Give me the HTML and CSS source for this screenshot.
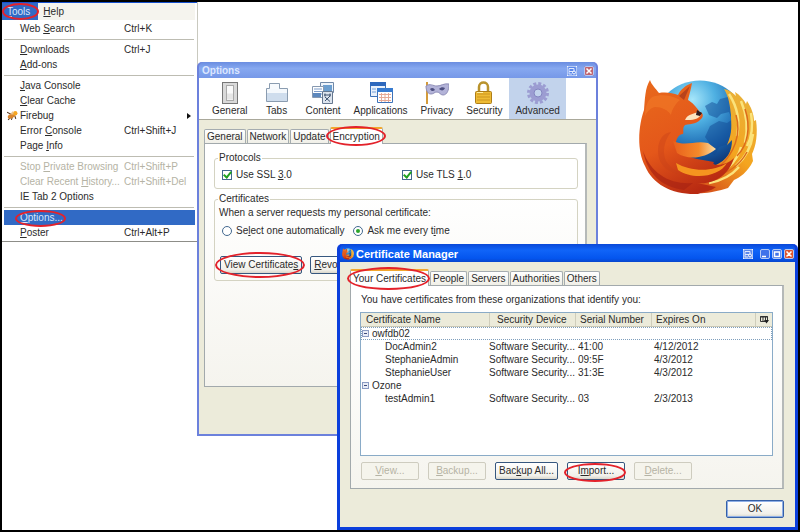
FILE: index.html
```html
<!DOCTYPE html>
<html lang="en">
<head>
<meta charset="utf-8">
<title>Certificate Manager</title>
<link rel="stylesheet" href="styles.css">
</head>
<body>
<svg class="defs" width="0" height="0" aria-hidden="true">
  <defs>
    <radialGradient id="globe" cx="0.42" cy="0.2" r="0.8"><stop offset="0" stop-color="#a6e6fa"/><stop offset="0.3" stop-color="#4fb0e2"/><stop offset="0.65" stop-color="#1a66b0"/><stop offset="1" stop-color="#0b2763"/></radialGradient>
    <linearGradient id="fur" x1="0.1" y1="0" x2="0.55" y2="1"><stop offset="0" stop-color="#e8691c"/><stop offset="0.55" stop-color="#e4571a"/><stop offset="1" stop-color="#b82a12"/></linearGradient>
    <linearGradient id="tail" x1="0.8" y1="0" x2="0.2" y2="1"><stop offset="0" stop-color="#e9b23a"/><stop offset="0.5" stop-color="#f4a51f"/><stop offset="1" stop-color="#d2451a"/></linearGradient>
    <linearGradient id="arm" x1="0" y1="0" x2="1" y2="0"><stop offset="0" stop-color="#e8601c"/><stop offset="0.6" stop-color="#f58a2a"/><stop offset="1" stop-color="#fde0a8"/></linearGradient>
    <symbol id="firefox" viewBox="0 0 120 118">
      <circle cx="62" cy="49" r="47.500" fill="url(#globe)"/>
      <path d="M67 27l7-4 5 2 3-5 8-2 5 4 6 1 3 8-5 5-6 2-2-5-8 2-4 4-8-3z M72 47l9-5 8 2 6-4 5 7-3 9-7 9-9 3-4 8-6-2 1-9-5-7z" fill="#124a93" opacity="0.5"/>
      <path d="M86 10C91 11 95 14 98 17L97 13C102 16 106 21 108 25L109 22C113 28 116 35 116 42L118 41C120 55 118 67 114 75L115 82C110 93 101 99 96 101L90 109C80 112 68 115 60 114L43 98L76 87C90 81 94 72 94 61L89 66C95 53 93 45 93 36C92 27 91 18 86 10Z" fill="url(#tail)"/>
      <path d="M91 15c9 14 11 28 8 42M103 22c6 14 7 29 4 42M113 34c2 12 1 24-4 33M103 68C99 84 85 95 70 100M115 55c-2 15-9 25-17 32M101 88c-7 8-18 14-30 16" fill="none" stroke="#fbe37b" stroke-width="2.500"/>
      <path d="M98 36c6 20-3 39-15 50M107 30c6 18 3 36-8 47M109 73c-7 13-20 22-36 25" fill="none" stroke="#dc6b1b" stroke-width="1.500"/>
      <path d="M12 1C13 5 18 10 21 14C28 13 35 14 40 16C42 11 48 6 54 4C53 10 51 17 50 21C54 23 59 29 62 33C65 34 66 37 63 40C60 44 54 45 47 46C44 49 46 52 45 55C41 55 39 59 38 63C41 72 49 78 59 80L76 83C72 87 87 88 96 79C91 96 76 106 59 104L78 108C72 113 67 112 60 115C35 116 15 106 7 87C-2 70 1 45 6 31C7 20 7 9 12 1Z" fill="url(#fur)"/>
      <path d="M14 18c8-3 20-2 28 3-4 3-8 9-9 15-3-5-9-8-16-8-5 1-8 5-10 9 0-8 2-15 7-19z" fill="#f17a28" opacity="0.6"/>
      <path d="M46 21l6-14-11 10z" fill="#b8431b"/>
      <path d="M50 41c7 0 11-2 13-5l-1-4c-7 4-12 2-15 9z" fill="#fbe3c0"/>
      <path d="M59 31l5 3-2 3-4-1z" fill="#2c1a20"/>
      <path d="M33 53c-7 9-9 20-5 29 5 8 12 12 20 14-18-1-28-10-28-24 0-11 5-18 13-19z" fill="#c7401a" opacity="0.4"/>
      <path d="M35 62C49 68 56 61 70 64L78 70C66 80 49 81 39 74Z" fill="url(#arm)"/>
      <path d="M5 72c8 23 28 34 50 32l-9 7C22 108 9 93 5 72z" fill="#a92313" opacity="0.7"/>
      <path d="M38 84c15 9 38 9 51 0-7 13-33 18-49 7z" fill="#f5951f"/>
    </symbol>
    <symbol id="dock" viewBox="0 0 10 10">
      <rect width="10" height="10" rx="1" fill="#5b87ea"/>
      <path d="M2 2.500h5v3H2zM2 5.500v2.500h3" fill="none" stroke="#dfe9ff" stroke-width="1"/>
      <circle cx="7" cy="6.500" r="1.500" fill="#5b87ea" stroke="#fff" stroke-width="1"/>
    </symbol>
  </defs>
</svg>

<main class="desktop">
  <nav class="menu">
    <div class="menubar">
      <button class="menubar-item open marked mark-tools"><u>T</u>ools</button>
      <button class="menubar-item"><u>H</u>elp</button>
    </div>
    <div class="menu-list">
      <button class="item"><span>Web <u>S</u>earch</span><span>Ctrl+K</span></button>
      <hr>
      <button class="item"><span><u>D</u>ownloads</span><span>Ctrl+J</span></button>
      <button class="item"><span><u>A</u>dd-ons</span></button>
      <hr>
      <button class="item"><span><u>J</u>ava Console</span></button>
      <button class="item"><span><u>C</u>lear Cache</span></button>
      <button class="item submenu"><svg class="bug" viewBox="0 0 10 10"><path d="M0 2l4 2M1 9l3-3M4 9l1-3M8 8L7 5" stroke="#5a3a22"/><ellipse cx="4" cy="5.500" rx="3.500" ry="2" fill="#d9852c" transform="rotate(-25 4 5.500)"/><circle cx="7.500" cy="3" r="2" fill="#f5a623"/><path d="M3 4l2-3 1 3z" fill="#e9c08b"/></svg><span>Firebug</span></button>
      <button class="item"><span>Error <u>C</u>onsole</span><span>Ctrl+Shift+J</span></button>
      <button class="item"><span>Page <u>I</u>nfo</span></button>
      <hr>
      <button class="item" disabled><span>Stop <u>P</u>rivate Browsing</span><span>Ctrl+Shift+P</span></button>
      <button class="item" disabled><span>Clear Recent <u>H</u>istory...</span><span>Ctrl+Shift+Del</span></button>
      <button class="item"><span>IE Tab 2 Options</span></button>
      <hr>
      <button class="item chosen"><span class="marked mark-options"><u>O</u>ptions...</span></button>
      <button class="item"><span><u>P</u>oster</span><span>Ctrl+Alt+P</span></button>
    </div>
  </nav>

  <svg class="logo" role="img" aria-label="Firefox"><use href="#firefox"/></svg>

  <section class="window options">
    <header class="titlebar">
      <h2>Options</h2>
      <button class="tb" aria-label="Dock"><svg><use href="#dock"/></svg></button>
      <button class="tb close" aria-label="Close options"><svg viewBox="0 0 10 10"><path d="M2.500 2.500l5 5M7.500 2.500l-5 5"/></svg></button>
    </header>
    <div class="toolbar">
      <button class="tool"><svg viewBox="0 0 24 24"><rect x="4.500" y="1.500" width="15" height="21" fill="#d9d9d9" stroke="#777"/><rect x="8.500" y="4.500" width="7" height="15" fill="#fafafa" stroke="#aaa"/><path d="M9 12.500h6v6H9z" fill="#e6e6e6"/></svg>General</button>
      <button class="tool"><svg viewBox="0 0 24 24"><path d="M1.500 20.500v-13h3v-5h10v5h8v13z" fill="#cfdded" stroke="#8a9cb0"/><path d="M2 8h20v4H2z" fill="#f4f8fc"/><path d="M5 3h9v5H5z" fill="#f7fafd"/></svg>Tabs</button>
      <button class="tool"><svg viewBox="0 0 24 24"><path d="M9.500 1.500h13v10h-13z" fill="#eef4fb" stroke="#7089a8"/><path d="M12 4h9v6h-9z" fill="#6c9fd0"/><path d="M1.500 5.500h11v11h-11z" fill="#fff" stroke="#8799b0"/><path d="M3 8h8M3 10.500h8M3 13h8" stroke="#7d9cc9"/><path d="M2 12h8v4H2z" fill="#5d88bd"/><path d="M11.500 10.500h10v12h-10z" fill="#dce4ee" stroke="#65778f"/><path d="M13 14h7M14 12.500v3M19 12.500v3M14 20l5-5M14 16l5 4.500" stroke="#3e526f"/></svg>Content</button>
      <button class="tool"><svg viewBox="0 0 24 24"><path d="M1.500 1.500h15v14h-15z" fill="#e9f1fb" stroke="#3d72b8"/><path d="M1 1h16v4H1z" fill="#2d68bd"/><path d="M3 8h4M3 11h4" stroke="#74a0d8"/><path d="M8.500 7.500h15v14h-15z" fill="#fff" stroke="#3d72b8"/><path d="M8 7h16v4H8z" fill="#377bd0"/><path d="M10 13.500h12M10 16.500h12M10 19.500h12M12.500 12v9M16 12v9M19.500 12v9" stroke="#e6aa96"/></svg>Applications</button>
      <button class="tool"><svg viewBox="0 0 24 24"><path d="M2 1v22" stroke="#d49b3a" stroke-width="2"/><path d="M1 5c4-3 7 0 11 0s7-3 12-2c0 6-2 11-6 11-3 0-3-3-6-3s-3 2-6 2c-4 0-5-5-5-8z" fill="#b3b3d8" stroke="#8f8eb8"/><path d="M5 8c2-2 4-1 5 1-2 2-4 1-5-1zM14 8c2-2 4-2 6-1-1 3-4 3-6 1z" fill="#4d4f80"/></svg>Privacy</button>
      <button class="tool"><svg viewBox="0 0 24 24"><path d="M7 12V6c0-6 9-6 9 0v6" fill="none" stroke="#b9932c" stroke-width="2.500"/><rect x="3.500" y="10.500" width="16" height="12" rx="1" fill="#eebb35" stroke="#ad7d18"/><path d="M5 13h13M5 16h13M5 19h13" stroke="#cc9520"/><path d="M5 11.500h6" stroke="#fff0a4"/></svg>Security</button>
      <button class="tool current"><svg viewBox="0 0 24 24"><circle cx="12" cy="12" r="9.500" fill="none" stroke="#9c9dd2" stroke-width="3" stroke-dasharray="2.980 1.990"/><circle cx="12" cy="12" r="6" fill="none" stroke="#9c9dd2" stroke-width="5"/><circle cx="12" cy="12" r="4" fill="#c2d3ec" stroke="#8485c0"/></svg>Advanced</button>
    </div>
    <div class="body">
      <div class="tabs">
        <button class="tab">General</button>
        <button class="tab">Network</button>
        <button class="tab">Update</button>
        <button class="tab active marked mark-encryption">Encryption</button>
      </div>
      <div class="panel">
        <fieldset class="protocols">
          <legend>Protocols</legend>
          <label><input type="checkbox" checked><span>Use SSL <u>3</u>.0</span></label>
          <label><input type="checkbox" checked><span>Use TLS <u>1</u>.0</span></label>
        </fieldset>
        <fieldset class="certificates">
          <legend>Certificates</legend>
          <p>When a server requests my personal certificate:</p>
          <div class="choices">
            <label><input type="radio" name="ask"><span>Se<u>l</u>ect one automatically</span></label>
            <label><input type="radio" name="ask" checked><span>Ask me every t<u>i</u>me</span></label>
          </div>
          <div class="actions">
            <button class="btn marked mark-view">View Certificate<u>s</u></button>
            <button class="btn"><u>R</u>evocation Lists</button>
          </div>
        </fieldset>
      </div>
    </div>
  </section>

  <section class="window manager">
    <header class="titlebar">
      <svg class="app-icon"><use href="#firefox"/></svg>
      <h2>Certificate Manager</h2>
      <button class="tb" aria-label="Dock"><svg><use href="#dock"/></svg></button>
      <button class="tb first" aria-label="Minimize"><svg viewBox="0 0 10 10"><path d="M2 7.500h4"/></svg></button>
      <button class="tb" aria-label="Maximize"><svg viewBox="0 0 10 10"><path d="M2.500 3h5v4.500h-5z"/></svg></button>
      <button class="tb close" aria-label="Close"><svg viewBox="0 0 10 10"><path d="M2.500 2.500l5 5M7.500 2.500l-5 5"/></svg></button>
    </header>
    <div class="body">
      <div class="tabs">
        <button class="tab active marked mark-yours">Your Certificates</button>
        <button class="tab">People</button>
        <button class="tab">Servers</button>
        <button class="tab">Authorities</button>
        <button class="tab">Others</button>
      </div>
      <div class="panel">
        <p>You have certificates from these organizations that identify you:</p>
        <div class="list">
          <table>
            <colgroup><col class="c-name"><col class="c-device"><col class="c-serial"><col><col class="c-pick"></colgroup>
            <thead>
              <tr><th>Certificate Name</th><th class="h-device">Security Device</th><th>Serial Number</th><th>Expires On</th><th><svg class="pick" viewBox="0 0 9 9" role="img" aria-label="Choose columns"><path d="M.5 1.500h7v5h-7zM0 2h8M3 2v4M5.500 2v3" fill="none" stroke="#333"/><path d="M4 5h5L6.500 8.500z" fill="#222"/></svg></th></tr>
            </thead>
            <tbody>
              <tr class="group focus"><td colspan="5"><span class="twisty"></span>owfdb02</td></tr>
              <tr><td>DocAdmin2</td><td class="device">Software Security...</td><td>41:00</td><td colspan="2">4/12/2012</td></tr>
              <tr><td>StephanieAdmin</td><td class="device">Software Security...</td><td>09:5F</td><td colspan="2">4/3/2012</td></tr>
              <tr><td>StephanieUser</td><td class="device">Software Security...</td><td>31:3E</td><td colspan="2">4/3/2012</td></tr>
              <tr class="group"><td colspan="5"><span class="twisty"></span>Ozone</td></tr>
              <tr><td>testAdmin1</td><td class="device">Software Security...</td><td>03</td><td colspan="2">2/3/2013</td></tr>
            </tbody>
          </table>
        </div>
        <div class="actions">
          <button class="btn" disabled><u>V</u>iew...</button>
          <button class="btn" disabled><u>B</u>ackup...</button>
          <button class="btn">Bac<u>k</u>up All...</button>
          <button class="btn marked mark-import">I<u>m</u>port...</button>
          <button class="btn" disabled><u>D</u>elete...</button>
        </div>
      </div>
      <footer><button class="btn default">OK</button></footer>
    </div>
  </section>
</main>
</body>
</html>
```
FILE: styles.css
```css
* { box-sizing: border-box; }

body {
  margin: 0;
  font: 10px/12px "Liberation Sans", Arial, sans-serif;
  color: #2b2b2b;
  background: #fff;
}

button {
  margin: 0;
  padding: 0;
  border: 0;
  background: none;
  font: inherit;
  color: inherit;
  white-space: nowrap;
}

h2, p { margin: 0; }
.defs { position: absolute; }

.desktop {
  position: relative;
  min-height: 100vh;
  overflow: hidden;
}

.desktop::after {
  content: "";
  position: absolute;
  inset: 0;
  border: 2px solid #000;
  pointer-events: none;
}

/* red highlight rings */
.marked { position: relative; }

.marked::after {
  content: "";
  position: absolute;
  z-index: 2;
  border: 2px solid #e3222b;
  border-radius: 50%;
  pointer-events: none;
}

.mark-tools::after { inset: 0 -1px 0 0; }
.mark-options::after { inset: -2px -3px -3px -5px; }
.mark-encryption::after { inset: -3px -4px -2px -5px; }
.mark-view::after { inset: -5px -4px -5px -6px; }
.mark-yours::after { inset: -4px -2px -4px -4px; }
.mark-import::after { inset: 0 -2px -3px -4px; }

/* tools menu */
.menu {
  position: absolute;
  left: 0;
  top: 0;
  width: 198px;
  padding: 3px 2px 0;
  border-right: 1px solid #c9c9bf;
  border-bottom: 1px solid #8d8d88;
  background: linear-gradient(#1550cf, #1550cf) 0 0 / 100% 3px no-repeat #fff;
}

.menubar {
  display: flex;
  height: 17px;
  background: #f5f4ee;
}

.menubar-item { padding: 0 8px 0 5px; }
.menubar-item.open { background: #316ac5; color: #dce6f8; }

.menu-list { padding: 1px 0; }

.item {
  display: grid;
  grid-template-columns: 104px 1fr;
  align-items: center;
  position: relative;
  width: 100%;
  height: 15px;
  padding-left: 16px;
  border-left: 2px solid #fff;
  text-align: left;
}

.item span { justify-self: start; }
.item:disabled { color: #b5b3a4; }
.item.chosen { background: #316ac5; color: #dce6f8; }

.menu-list hr {
  height: 1px;
  margin: 3px 1px 2px 2px;
  border: 0;
  background: #bdbcb2;
}

.bug {
  position: absolute;
  left: 3px;
  top: 2px;
  width: 11px;
  height: 11px;
}

.submenu::after {
  content: "";
  position: absolute;
  right: 4px;
  top: 5px;
  border: 3px solid transparent;
  border-left: 4px solid #111;
  border-right: 0;
}

.logo {
  position: absolute;
  left: 79.75%;
  top: 79px;
  width: 120px;
  height: 118px;
}

/* windows */
.window {
  position: absolute;
  border-radius: 5px 5px 0 0;
}

.titlebar {
  display: flex;
  align-items: center;
  gap: 2px;
}

.titlebar h2 { flex: 1; }

.tb {
  width: 10px;
  height: 10px;
  border-radius: 2px;
  background: #3f72ea;
  outline: 1px solid #b4c9f5;
  outline-offset: -1px;
}

.tb svg {
  display: block;
  width: 10px;
  height: 10px;
  fill: none;
  stroke: #fff;
  stroke-width: 1.5px;
}

.tb.close { background: #e0532c; }

.body { background: #ecebda; }

.tabs { display: flex; align-items: flex-end; gap: 1px; }

.tab {
  height: 14px;
  padding: 0 2px;
  border: 1px solid #a5acb0;
  border-bottom: 0;
  border-radius: 2px 2px 0 0;
  background: linear-gradient(#fff, #f0efe7);
}

.tab.active {
  height: 17px;
  margin-bottom: -1px;
  border-top: 2px solid #f2a72e;
  background: #fff;
  z-index: 1;
}

.panel {
  border: 1px solid #a2a9ac;
  border-right: 2px solid #b5b9b8;
  background: linear-gradient(#fff 20%, #f5f4ee);
}

.btn {
  height: 18px;
  min-width: 58px;
  padding: 0 3px;
  border: 1px solid #36577f;
  border-radius: 2px;
  background: linear-gradient(#fff, #f1f0ea 80%, #d9d6cb);
}

.btn:disabled {
  border-color: #ceccbf;
  background: #f5f4ec;
  color: #b5b3a4;
}

.btn.default {
  border-color: #3560a8;
  box-shadow: inset 0 0 0 1px #8eafe6;
}

.actions { display: flex; }

/* options window */
.options {
  left: 24.625%;
  top: 62px;
  width: 50.125%;
  border: 2px solid #6c81dc;
  border-top: 0;
  background: #6c81dc;
}

.options .titlebar {
  height: 16px;
  padding: 2px 2px 0 3px;
  gap: 7px;
  border-radius: 5px 5px 0 0;
  background: linear-gradient(#6a8de0, #86a8f0 40%, #7698e8);
}

.options .titlebar h2 { font-size: 10px; color: #dce7ff; }
.options .close { background: #c0646f; }

.toolbar {
  display: flex;
  gap: 1px;
  padding-left: 7px;
  border-bottom: 1px solid #aaa89a;
  background: #fff;
}

.tool {
  display: flex;
  flex-direction: column;
  align-items: center;
  min-width: 44px;
  padding: 3px 6px 2px;
}

.tool svg { width: 24px; height: 24px; }
.tool.current { background: #c2d3ec; }

.options .body { padding: 7px 9px 47px 5px; }
.options .tab { line-height: 13px; }

.options .panel {
  min-height: 244px;
  padding: 8px 7px 0 9px;
}

fieldset {
  margin: 0;
  padding: 0 7px;
  border: 1px solid #d4d3c2;
  border-radius: 3px;
}

legend { margin-left: -4px; padding: 0 1px; }

fieldset label {
  display: flex;
  align-items: center;
  gap: 4px;
}

.protocols {
  display: grid;
  grid-template-columns: 180px 1fr;
  padding-top: 5px;
  padding-bottom: 7px;
}

.certificates {
  margin-top: 4px;
  padding: 2px 5px 6px;
}

.choices {
  display: flex;
  gap: 9px;
  padding: 6px 2px 19px;
}

.certificates .actions { gap: 8px; }
.certificates legend { margin-left: -2px; }
.certificates p { margin-left: -1px; }

input {
  appearance: none;
  display: grid;
  place-items: center;
  width: 10px;
  height: 10px;
  margin: 0;
  border: 1px solid #42688f;
  background: #fff;
}

input[type="radio"] { border-radius: 50%; }

input[type="checkbox"]:checked::after {
  content: "";
  width: 3px;
  height: 6px;
  margin-top: -2px;
  border: solid #21a121;
  border-width: 0 2px 2px 0;
  transform: rotate(40deg);
}

input[type="radio"]:checked::after {
  content: "";
  width: 4px;
  height: 4px;
  border-radius: 50%;
  background: #2ba52b;
}

/* certificate manager window */
.manager {
  left: 42.125%;
  right: 2px;
  top: 244px;
  border: 3px solid #0b3fdc;
  border-top: 0;
  background: #0b3fdc;
}

.manager .titlebar {
  height: 18px;
  padding: 1px 1px 0 2px;
  border-radius: 5px 5px 0 0;
  background: linear-gradient(#0a48d8, #1064f8 35%, #0455ee 80%, #0846cc);
}

.manager .titlebar h2 { font-size: 11px; color: #fff; }
.app-icon { width: 12px; height: 12px; }
.tb.first { margin-left: 5px; }

.manager .body { padding: 7px 11px 9px 10px; }

.manager .panel { padding: 8px 9px; }
.manager .panel p { padding-left: 1px; }

.list {
  min-height: 144px;
  margin: 6px 0;
  border: 1px solid #8aabc7;
  background: #fff;
}

table {
  width: 100%;
  table-layout: fixed;
  border-spacing: 0;
  line-height: 13px;
}

.c-name { width: 128px; }
.c-device { width: 86px; }
.c-serial { width: 76px; }
.c-pick { width: 17px; }

th, td { padding: 0; text-align: left; white-space: nowrap; }

th {
  height: 14px;
  padding-left: 5px;
  border-bottom: 1px solid #c9c7b5;
  background: #ecebda;
  font-weight: normal;
}

.h-device { padding-left: 8px; }
th:not(:first-child) { box-shadow: inset 1px 0 #cfcdbb; }

td { height: 13px; padding-left: 3px; }
td:first-child { padding-left: 24px; }
td.device { padding-left: 0; }
.group td:first-child { padding-left: 1px; }
.focus td { outline: 1px dotted #7f9fbd; outline-offset: -1px; }

.twisty {
  display: inline-block;
  width: 7px;
  height: 7px;
  margin-right: 3px;
  border: 1px solid #8b9cc4;
  background: linear-gradient(#3c4a7c, #3c4a7c) center / 3px 1px no-repeat #e8ecf6;
}

.pick { display: block; width: 9px; height: 9px; }

.manager .actions { gap: 9px; padding-left: 1px; }

footer {
  display: flex;
  justify-content: flex-end;
  padding-top: 11px;
}
```
